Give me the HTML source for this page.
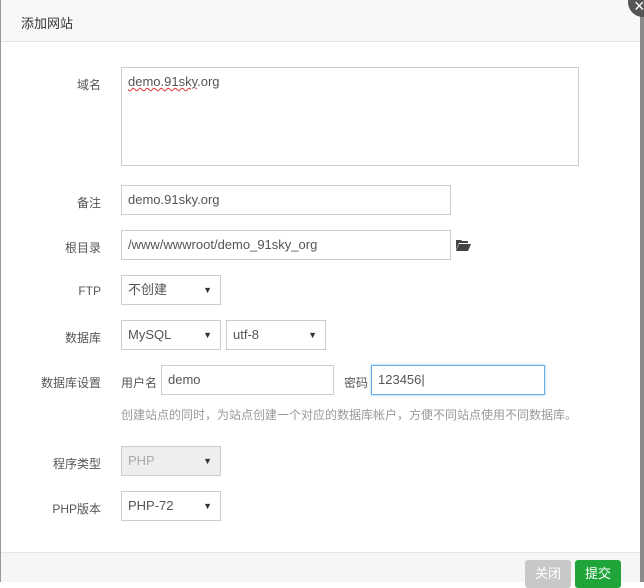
<!DOCTYPE html>
<html><head><meta charset="utf-8"><style>
*{box-sizing:border-box;margin:0;padding:0}
body{width:644px;height:582px;overflow:hidden;background:#fff;font-family:"Liberation Sans","Noto Sans CJK SC",sans-serif;font-size:12px;color:#555;position:relative}
.side{position:absolute;left:640px;top:0;width:4px;height:582px;background:#8a8a8a}
.lside{position:absolute;left:0;top:0;width:1px;height:582px;background:#999}
.hdr{position:absolute;left:1px;top:0;width:639px;height:42px;background:#f8f8f8;border-bottom:1px solid #e5e5e5}
.hdr span{position:absolute;left:20px;top:13px;font-size:13px;color:#333}
.close{position:absolute;left:628px;top:-13px;width:30px;height:30px;border-radius:50%;background:#555;color:#fff;font-size:18px;line-height:30px;text-align:center}
.close span{position:absolute;left:6px;top:4px}
.lbl{position:absolute;width:101px;text-align:right;color:#555}
.in{position:absolute;border:1px solid #ccc;background:#fff;height:30px;padding:0 6px;line-height:28px;color:#555;font-size:13px}
.sel::after{content:"▼";position:absolute;right:8px;top:0;font-size:9px;color:#333}
.tip{position:absolute;left:121px;top:406px;color:#999;font-size:12px}
.ftr{position:absolute;left:1px;top:552px;width:639px;height:30px;background:#f6f6f6;border-top:1px solid #e5e5e5}
.btn{position:absolute;top:560px;height:28px;width:46px;border-radius:3px;color:#fff;text-align:center;line-height:28px;font-size:13px}
</style></head><body>
<div class="lside"></div>
<div class="hdr"><span>添加网站</span></div>
<div class="side"></div>
<div class="close"><span>×</span></div>

<div class="lbl" style="top:76px">域名</div>
<div class="in" style="left:121px;top:67px;width:458px;height:99px;line-height:28px;padding-top:0"><span style="text-decoration:underline wavy #d33;text-decoration-thickness:1px">demo.91sky</span>.org</div>

<div class="lbl" style="top:194px">备注</div>
<div class="in" style="left:121px;top:185px;width:330px">demo.91sky.org</div>

<div class="lbl" style="top:239px">根目录</div>
<div class="in" style="left:121px;top:230px;width:330px">/www/wwwroot/demo_91sky_org</div>
<svg style="position:absolute;left:456px;top:239px" width="15" height="12" viewBox="0 0 15 12"><path d="M0 1h5l1 1h6v2H3L0 11z M3 5h12l-3 7H0z" fill="#444"/></svg>

<div class="lbl" style="top:284px">FTP</div>
<div class="in sel" style="left:121px;top:275px;width:100px">不创建</div>

<div class="lbl" style="top:329px">数据库</div>
<div class="in sel" style="left:121px;top:320px;width:100px">MySQL</div>
<div class="in sel" style="left:226px;top:320px;width:100px">utf-8</div>

<div class="lbl" style="top:374px">数据库设置</div>
<div style="position:absolute;left:121px;top:374px">用户名</div>
<div class="in" style="left:161px;top:365px;width:173px">demo</div>
<div style="position:absolute;left:344px;top:374px">密码</div>
<div class="in" style="left:371px;top:365px;width:174px;border-color:#66afe9;box-shadow:0 0 3px rgba(102,175,233,.6)">123456|</div>
<div class="tip">创建站点的同时，为站点创建一个对应的数据库帐户，方便不同站点使用不同数据库。</div>

<div class="lbl" style="top:455px">程序类型</div>
<div class="in sel" style="left:121px;top:446px;width:100px;background:#eee;color:#aaa">PHP</div>

<div class="lbl" style="top:500px">PHP版本</div>
<div class="in sel" style="left:121px;top:491px;width:100px">PHP-72</div>

<div class="ftr"></div>
<div class="btn" style="left:525px;background:#c8c8c8">关闭</div>
<div class="btn" style="left:575px;background:#20a53a">提交</div>
</body></html>
